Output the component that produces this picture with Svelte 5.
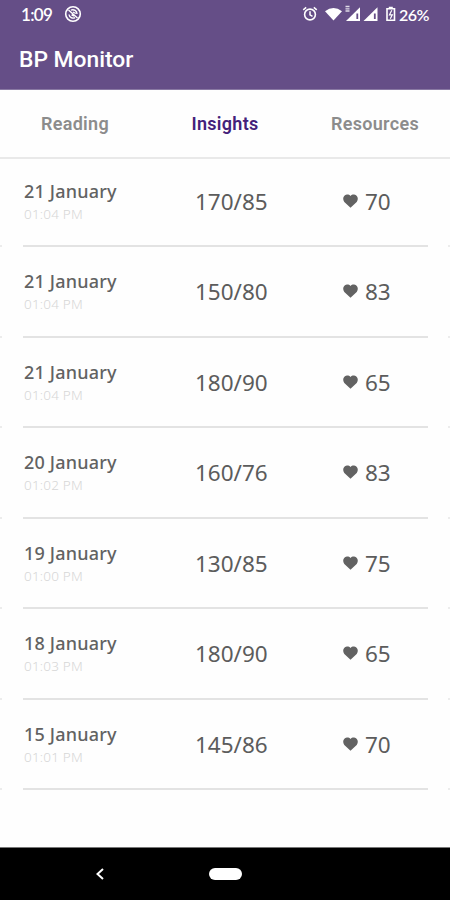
<script>
    let activeTab = $state('Insights');

    const tabs = ['Reading', 'Insights', 'Resources'];

    const readings = [
        { date: '21 January', time: '01:04 PM', pressure: '170/85', pulse: 70 },
        { date: '21 January', time: '01:04 PM', pressure: '150/80', pulse: 83 },
        { date: '21 January', time: '01:04 PM', pressure: '180/90', pulse: 65 },
        { date: '20 January', time: '01:02 PM', pressure: '160/76', pulse: 83 },
        { date: '19 January', time: '01:00 PM', pressure: '130/85', pulse: 75 },
        { date: '18 January', time: '01:03 PM', pressure: '180/90', pulse: 65 },
        { date: '15 January', time: '01:01 PM', pressure: '145/86', pulse: 70 }
    ];
</script>

<div class="screen">
    <header>
        <div class="status">
            <span class="clock">1:09</span>
            <svg class="sync" width="18" height="18" viewBox="0 0 18 18" fill="none" stroke="#fff">
                <circle cx="9" cy="9" r="7.3" stroke-width="1.6" />
                <path d="M5 9.5a4.2 4.2 0 0 0 6 3.2M13 9a4.2 4.2 0 0 0-6-3.8M4.5 5l9 8M7.5 9.8l2.8 1.2M9 7l2.8 1.5" stroke-width="1.4" />
            </svg>
            <svg class="icons" width="98" height="20" viewBox="0 0 98 20" fill="none" stroke="#fff">
                <circle cx="9" cy="10.5" r="5.4" stroke-width="1.6" />
                <path d="M9 7.2v3.6l2.5 1.5M2.2 5.8l3-2.5M12.8 3.3l3 2.5" stroke-width="1.5" />
                <path d="M24 7.3Q32.5 .8 41 7.3L32.5 16.5z" fill="#fff" stroke="none" />
                <path d="M59 3.2V17H45z" fill="#fff" stroke="none" />
                <path d="M76.5 3.2V17H62.5z" fill="#fff" stroke="none" />
                <path d="M56.3 9.500v5.500M73.800 9.500v5.500" stroke="#654e87" stroke-width="1.8" />
                <path d="M44.5 2.5h4M44.5 4.8h4M44.5 7h4" stroke-width="1.3" opacity=".8" />
                <path d="M86 4.8h7.5v11.5H86zM87.8 3.5h4" stroke-width="1.6" />
                <path d="M90.8 6.3l-2.3 4.5h2.8l-2 4" stroke-width="1.2" />
            </svg>
            <span class="battery">26%</span>
        </div>
        <h1>BP Monitor</h1>
    </header>

    <nav>
        {#each tabs as tab}
            <button class:active={tab === activeTab} onclick={() => activeTab = tab}>{tab}</button>
        {/each}
    </nav>

    <main>
        {#each readings as reading}
            <div class="row">
                <div class="when">
                    <div class="date">{reading.date}</div>
                    <div class="time">{reading.time}</div>
                </div>
                <div class="pressure">{reading.pressure}</div>
                <div class="pulse">
                    <svg width="15" height="14" viewBox="0 0 15 14">
                        <path d="M7.5 13.8L1.3 8C-1 5 .5 1 3.8 .6c1.5-.1 2.8.4 3.7 1.3C8.4 1 9.7.5 11.2.6c3.3.4 4.8 4.4 2.5 7.4z" fill="#626262" />
                    </svg>
                    <span>{reading.pulse}</span>
                </div>
            </div>
        {/each}
    </main>

    <footer>
        <svg width="10" height="14" viewBox="0 0 10 14">
            <path d="M8 2L2.5 7L8 12" fill="none" stroke="#fff" stroke-width="2" />
        </svg>
        <div class="home"></div>
    </footer>
</div>

<style>
    :global(body) {
        margin: 0;
    }

    .screen {
        display: flex;
        flex-direction: column;
        width: 450px;
        height: 900px;
        overflow: hidden;
        background: #fefefe;
        font-family: "Noto Sans", sans-serif;
    }

    header {
        box-sizing: border-box;
        height: 90px;
        flex: none;
        background: #654e87;
        border-bottom: 1px solid #8979a3;
        color: white;
    }

    .status {
        display: flex;
        align-items: center;
        height: 28px;
        padding: 0 20px 0 21px;
        font-family: "Lato", sans-serif;
        font-weight: 600;
    }

    .clock {
        width: 31px;
        font-size: 17px;
        letter-spacing: -0.7px;
    }

    .sync {
        margin-left: 12px;
    }

    .icons {
        margin-left: auto;
    }

    .battery {
        width: 31px;
        font-size: 16px;
        letter-spacing: -0.5px;
    }

    h1 {
        margin: 17px 0 0 19px;
        font-family: Roboto, sans-serif;
        font-size: 22.8px;
        font-weight: 500;
        line-height: 30px;
    }

    nav {
        display: grid;
        grid-template-columns: repeat(3, 1fr);
        box-sizing: border-box;
        height: 69px;
        flex: none;
        border-bottom: 2px solid #e9e9e9;
    }

    nav button {
        padding: 0;
        border: none;
        background: none;
        color: #8c8c8c;
        font-family: Roboto, sans-serif;
        font-size: 18px;
        font-weight: 600;
        letter-spacing: 0.3px;
    }

    nav button.active {
        color: #43217a;
    }

    main {
        flex: 1;
    }

    .row {
        display: grid;
        grid-template-columns: 171px 147px 1fr;
        align-items: center;
        box-sizing: border-box;
        height: 90.5px;
        padding: 0 23px 1px 24px;
        /* divider, with the ends of the neighbouring pages at both edges */
        background: linear-gradient(to right, #ececec 2px, transparent 2px 23px, #e3e3e3 23px 428px, transparent 428px 448px, #ececec 448px) bottom / 100% 2px no-repeat;
    }

    .row:first-child {
        height: 88px;
        padding-bottom: 3px;
    }

    .when {
        padding-top: 1px;
    }

    .date {
        color: #626262;
        font-size: 18px;
        font-weight: 500;
        line-height: 24px;
        letter-spacing: 0.2px;
    }

    .time {
        color: #d6d6d6;
        font-size: 13.5px;
        font-weight: 300;
        line-height: 22px;
        letter-spacing: 0.2px;
    }

    .pressure, .pulse {
        color: #5c5c5c;
        font-size: 22.5px;
    }

    .pulse {
        display: flex;
        align-items: center;
    }

    .pulse svg {
        margin: 0 7px 1px 1px;
    }

    footer {
        display: flex;
        align-items: center;
        height: 53px;
        flex: none;
        padding-left: 95px;
        background: black;
        border-top: 1px solid #777;
        box-sizing: border-box;
    }

    .home {
        width: 33px;
        height: 12px;
        margin-left: 104px;
        border-radius: 6px;
        background: white;
    }
</style>
